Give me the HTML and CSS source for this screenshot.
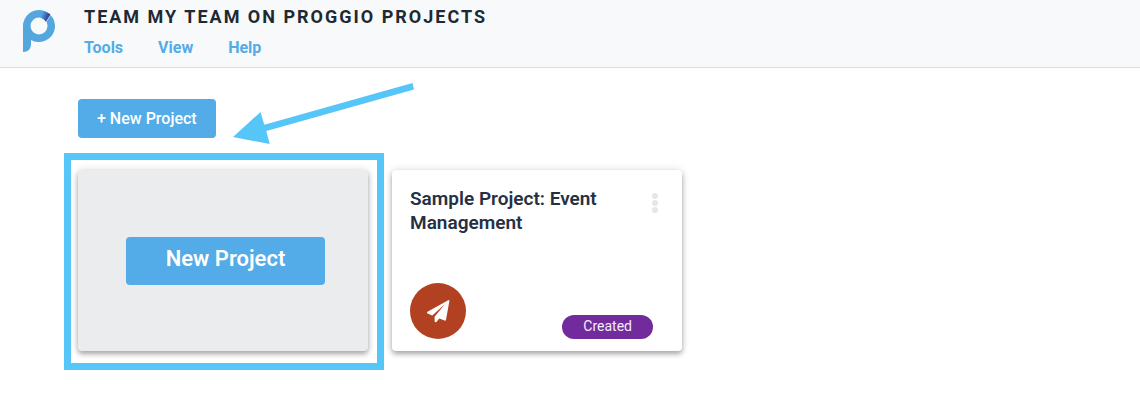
FILE: index.html
```html
<!DOCTYPE html>
<html lang="en">
<head>
<meta charset="utf-8">
<meta name="viewport" content="width=device-width, initial-scale=1">
<title>Proggio Projects</title>
<link rel="stylesheet" href="styles.css">
</head>
<body>
<header class="topbar">
  <svg class="logo" viewBox="0 0 32 42" role="img" aria-label="Proggio">
    <defs>
      <linearGradient id="fold" x1="0" y1="0" x2="1" y2="0.4">
        <stop offset="0" stop-color="#53a7de"/>
        <stop offset="0.200" stop-color="#53a7de"/>
        <stop offset="0.800" stop-color="#34479d"/>
      </linearGradient>
    </defs>
    <path fill="#53a7de" fill-rule="evenodd" d="M0 42V16A16 16 0 1 1 8 29.9V34C8 39 5 42 0 42ZM16 7.500a8.500 8.500 0 1 0 0 17a8.500 8.500 0 1 0 0-17Z"/>
    <path fill="url(#fold)" d="M19 1C22.500 1.500 25 2.400 27.600 4.500L23 12C21.500 9.800 19.800 8.500 17.500 7.700Z"/>
    <path fill="#f8f9fb" d="M27.600 4.500l.4.300-4.700 7.500-.4-.4Z"/>
  </svg>
  <div class="heading">
    <h1 class="team-title">TEAM MY TEAM ON PROGGIO PROJECTS</h1>
    <nav class="menu">
      <a class="menu-link" href="#tools">Tools</a>
      <a class="menu-link" href="#view">View</a>
      <a class="menu-link" href="#help">Help</a>
    </nav>
  </div>
</header>
<main class="content">
  <div class="toolbar">
    <button class="button" type="button">+ New Project</button>
    <svg class="arrow" viewBox="0 0 182 60" aria-hidden="true">
      <path fill="#56c5f8" d="M0 52L27.500 27 31.300 39.700 179.500-2 181 4.500 33.300 46 36.700 59Z"/>
    </svg>
  </div>
  <div class="cards">
    <section class="card card-new">
      <button class="button button-large" type="button">New Project</button>
      <span class="highlight"></span>
    </section>
    <article class="card card-project">
      <div class="card-top">
        <h2 class="card-title">Sample Project: Event Management</h2>
        <button class="more" type="button" aria-label="Project options">
          <span class="dot"></span><span class="dot"></span><span class="dot"></span>
        </button>
      </div>
      <div class="card-bottom">
        <span class="badge">
          <svg class="plane" viewBox="0 0 24 24" aria-hidden="true">
            <path fill="#fff" d="M22.200 1.200Q23.500.6 23.400 2L20 20.800Q19.700 22 18.500 21.600L13.300 19.400 10.600 22.700Q9 24 8.600 22V17.700L18.800 5.200 6.300 16.400 1.500 14.400Q.3 13.700 1.500 12.800Z"/>
          </svg>
        </span>
        <span class="status">Created</span>
      </div>
    </article>
  </div>
</main>
</body>
</html>
```

FILE: styles.css
```css
* {
  box-sizing: border-box;
}

body {
  margin: 0;
  background: #fff;
  font-family: Roboto, "Liberation Sans", sans-serif;
}

.topbar {
  display: flex;
  align-items: flex-start;
  gap: 29px;
  padding: 6px 23px 8px;
  background: #f8f9fb;
  border-bottom: 1px solid #dadde0;
}

.logo {
  width: 32px;
  height: 42px;
  margin-top: 4px;
  flex: none;
}

.heading {
  display: flex;
  flex-direction: column;
  gap: 9px;
}

.team-title {
  margin: 0;
  font-size: 18px;
  line-height: 22px;
  font-weight: 700;
  letter-spacing: 2px;
  color: #1d2a33;
}

.menu {
  display: flex;
  gap: 35px;
}

.menu-link {
  font-size: 16px;
  line-height: 22px;
  font-weight: 700;
  color: #53abe7;
  text-decoration: none;
}

.content {
  padding: 31px 78px;
}

.toolbar {
  position: relative;
  display: flex;
  margin-bottom: 32px;
}

.button {
  padding: 10px 19px 9px;
  border: 0;
  border-radius: 4px;
  background: #53abe7;
  color: #fff;
  font-family: inherit;
  font-size: 16px;
  line-height: 20px;
  font-weight: 500;
  cursor: pointer;
}

.button-large {
  padding: 10px 40px 14px;
  font-size: 22px;
  line-height: 24px;
  font-weight: 600;
}

.arrow {
  position: absolute;
  left: 155px;
  top: -14px;
  width: 182px;
  height: 60px;
  overflow: visible;
}

.cards {
  display: grid;
  grid-template-columns: repeat(auto-fill, 290px);
  gap: 24px;
}

.card {
  min-height: 181px;
  border-radius: 4px;
  background: #fff;
  box-shadow: 0 3px 5px rgba(0, 0, 0, 0.3), 0 0 10px rgba(0, 0, 0, 0.12);
}

.card-new {
  position: relative;
  display: flex;
  align-items: center;
  justify-content: center;
  padding-left: 5px;
  background: #ebeced;
}

.highlight {
  position: absolute;
  inset: -17px -16px -19px -14px;
  border: 7px solid #56c5f8;
  pointer-events: none;
}

.card-project {
  display: flex;
  flex-direction: column;
  justify-content: space-between;
  padding: 17px 18px 12px;
}

.card-top {
  display: flex;
  justify-content: space-between;
  align-items: flex-start;
}

.card-title {
  max-width: 200px;
  margin: 0;
  font-size: 19px;
  line-height: 24px;
  font-weight: 600;
  color: #263043;
}

.more {
  display: flex;
  flex-direction: column;
  gap: 1px;
  padding: 6px;
  border: 0;
  background: none;
}

.dot {
  width: 6px;
  height: 6px;
  border-radius: 50%;
  background: #e6e6e6;
}

.card-bottom {
  display: flex;
  justify-content: space-between;
  align-items: flex-end;
  padding-right: 11px;
}

.badge {
  display: flex;
  align-items: center;
  justify-content: center;
  width: 56px;
  height: 56px;
  border-radius: 50%;
  background: #b24122;
}

.plane {
  width: 24px;
  height: 24px;
}

.status {
  padding: 1px 21px 3px;
  border-radius: 12px;
  background: #722b9d;
  color: #f4edf8;
  font-size: 14px;
  line-height: 20px;
}
```
